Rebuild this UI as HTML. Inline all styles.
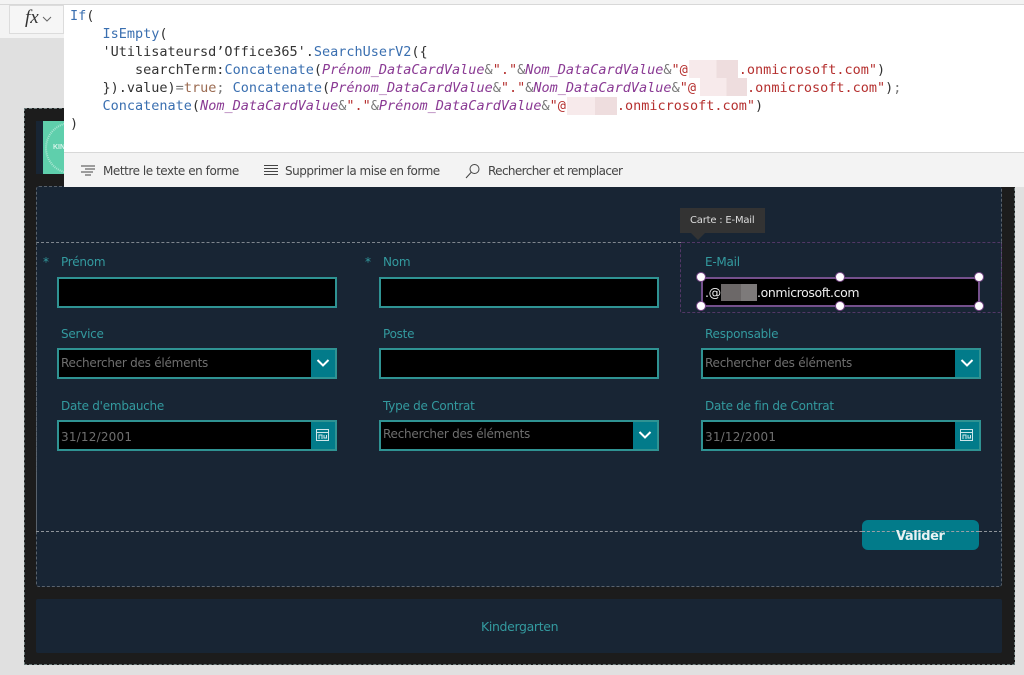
<!DOCTYPE html>
<html><head><meta charset="utf-8">
<style>
html,body{margin:0;padding:0;width:1024px;height:675px;overflow:hidden;background:#e0e0e0;font-family:"DejaVu Sans","Liberation Sans",sans-serif}
.a{position:absolute;box-sizing:border-box}
.t{position:absolute;white-space:nowrap;font-size:12px;line-height:16px;letter-spacing:-.02em}
.lab{color:#339a9f}
.in{position:absolute;box-sizing:border-box;width:280px;height:31px;background:#000;border:2px solid #2f9393}
.btn{position:absolute;right:0;top:0;bottom:0;width:24px;background:#027b8a}
.ph{position:absolute;left:2px;top:5px;color:#6f6f6f;font-size:12px;line-height:16px;white-space:nowrap;letter-spacing:-.02em}
.dt{top:7px;letter-spacing:.2px}
.code{position:absolute;left:70px;top:7px;font:13.500px/18px "DejaVu Sans Mono",monospace;color:#333;white-space:pre}
.gap{display:inline-block;width:51px}
.f{color:#3a6fb0}.v{color:#8a3a94;font-style:italic}.s{color:#b5302f}.g{color:#777}.b{color:#9a6a50}
.blur{position:absolute;height:18px;background:linear-gradient(90deg,#f7eaeb 0,#f7eaeb 56%,#eeddde 56%,#eeddde 100%)}
.h{position:absolute;width:10px;height:10px;border-radius:50%;background:#fff;border:1.500px solid #7b4a8b;box-sizing:border-box}
.tb{position:absolute;top:163px;font:12px/16px "DejaVu Sans","Liberation Sans",sans-serif;color:#444;white-space:nowrap;letter-spacing:-.5px}
</style></head><body>
<div class="a" style="left:0;top:0;width:1024px;height:38px;background:#f3f3f3"></div>
<div class="a" style="left:0;top:4px;width:1024px;height:1px;background:#d8d8d8"></div>
<div class="a" style="left:9px;top:5px;width:55px;height:29px;background:#f6f6f6;border:1px solid #dcdcdc"></div>
<div class="t" style="left:25px;top:8px;font:italic 19px/20px 'Liberation Serif',serif;color:#333;letter-spacing:0">fx</div>
<svg class="a" style="left:41px;top:15px" width="12" height="8"><path d="M2 2 L6 6 L10 2" fill="none" stroke="#666" stroke-width="1"/></svg>

<div class="a" style="left:24px;top:108px;width:991px;height:557px;background:#1c1c1c;border:1px dashed #6b7a7a"></div>
<div class="a" style="left:36px;top:121px;width:8px;height:53px;background:#182534"></div>
<div class="a" style="left:43px;top:121px;width:22px;height:53px;background:#5fcfac;overflow:hidden">
<svg width="22" height="53" style="position:absolute;left:0;top:0"><circle cx="28" cy="27" r="25" fill="none" stroke="#a8e6d2" stroke-width="2" stroke-dasharray="1 1"/></svg>
<div style="position:absolute;left:10px;top:22px;font:bold 7px/9px 'Liberation Sans',sans-serif;color:#d8f4ea">KIN</div></div>
<div class="a" style="left:36px;top:186px;width:966px;height:401px;background:#182534;border:1px dashed #59626c;border-radius:3px"></div>
<div class="a" style="left:36px;top:599px;width:966px;height:54px;background:#182534;border-radius:2px"></div>
<div class="t lab" style="left:481px;top:619px;font-size:12.500px;letter-spacing:-.35px">Kindergarten</div>

<div class="a" style="left:36px;top:242px;width:645px;height:290px;border-top:1px dashed #7f868e;border-left:1px dashed #59626c"></div>
<div class="a" style="left:36px;top:531px;width:966px;height:1px;border-top:1px dashed #8f959b"></div>
<div class="a" style="left:1001px;top:242px;width:1px;height:290px;border-left:1px dashed #59626c"></div>
<div class="a" style="left:680px;top:242px;width:322px;height:71px;border:1px dashed #523766;border-radius:2px"></div>

<div class="a" style="left:680px;top:208px;width:85px;height:25px;background:#333"></div>
<div class="a" style="left:691px;top:233px;width:0;height:0;border-left:7px solid transparent;border-right:7px solid transparent;border-top:7px solid #333"></div>
<div class="t" style="left:690px;top:213px;font-size:10px;line-height:15px;color:#ddd">Carte : E-Mail</div>

<div class="t lab" style="left:43px;top:254px">*</div>
<div class="t lab" style="left:61px;top:254px">Prénom</div>
<div class="t lab" style="left:365px;top:254px">*</div>
<div class="t lab" style="left:383px;top:254px">Nom</div>
<div class="t lab" style="left:705px;top:254px">E-Mail</div>
<div class="t lab" style="left:61px;top:326px">Service</div>
<div class="t lab" style="left:383px;top:326px">Poste</div>
<div class="t lab" style="left:705px;top:326px">Responsable</div>
<div class="t lab" style="left:61px;top:398px">Date d'embauche</div>
<div class="t lab" style="left:383px;top:398px">Type de Contrat</div>
<div class="t lab" style="left:705px;top:398px">Date de fin de Contrat</div>

<div class="in" style="left:57px;top:277px"></div>
<div class="in" style="left:379px;top:277px"></div>
<div class="in" style="left:701px;top:277px;width:279px;height:30px;border-color:#74508c"></div>
<div class="t" style="left:705px;top:285px;color:#eee;font-size:12.500px;letter-spacing:-.4px">.@</div>
<div class="a" style="left:721px;top:284px;width:36px;height:17px;background:linear-gradient(90deg,#6c6868 0,#6c6868 55%,#7d7a7a 55%,#7d7a7a 100%)"></div>
<div class="t" style="left:757px;top:285px;color:#eee;font-size:12.500px;letter-spacing:-.4px">.onmicrosoft.com</div>
<div class="h" style="left:696px;top:272px"></div><div class="h" style="left:835px;top:272px"></div><div class="h" style="left:974px;top:272px"></div>
<div class="h" style="left:696px;top:301px"></div><div class="h" style="left:835px;top:301px"></div><div class="h" style="left:974px;top:301px"></div>

<div class="in" style="left:57px;top:348px"><div class="ph">Rechercher des éléments</div><div class="btn"><svg width="24" height="27"><path d="M6.500 10 L12 15.500 L17.500 10" fill="none" stroke="#fff" stroke-width="2"/></svg></div></div>
<div class="in" style="left:379px;top:348px"></div>
<div class="in" style="left:701px;top:348px"><div class="ph">Rechercher des éléments</div><div class="btn"><svg width="24" height="27"><path d="M6.500 10 L12 15.500 L17.500 10" fill="none" stroke="#fff" stroke-width="2"/></svg></div></div>

<div class="in" style="left:57px;top:420px"><div class="ph dt">31/12/2001</div><div class="btn"><svg width="24" height="27"><path d="M5.500 7.500h12v11h-12zM5.500 10.500h12M8 17v-4h3v4M13 13v3h2.500v-3" fill="none" stroke="#cfe6ea" stroke-width="1"/></svg></div></div>
<div class="in" style="left:379px;top:420px"><div class="ph" style="top:4px">Rechercher des éléments</div><div class="btn"><svg width="24" height="27"><path d="M6.500 10 L12 15.500 L17.500 10" fill="none" stroke="#fff" stroke-width="2"/></svg></div></div>
<div class="in" style="left:701px;top:420px"><div class="ph dt">31/12/2001</div><div class="btn"><svg width="24" height="27"><path d="M5.500 7.500h12v11h-12zM5.500 10.500h12M8 17v-4h3v4M13 13v3h2.500v-3" fill="none" stroke="#cfe6ea" stroke-width="1"/></svg></div></div>

<div class="a" style="left:862px;top:520px;width:117px;height:30px;background:#027b8a;border-radius:6px"></div>
<div class="a" style="left:862px;top:531px;width:117px;height:1px;border-top:1px dashed #9aa0a6"></div>
<div class="t" style="left:896px;top:529px;font-size:13px;font-weight:bold;color:#e8f2f3;letter-spacing:-.45px">Valider</div>

<div class="a" style="left:64px;top:5px;width:960px;height:148px;background:#fff"></div>
<div class="a" style="left:64px;top:152px;width:960px;height:35px;background:#f3f3f3;border-top:1px solid #d8d8d8"></div>
<div class="code"><span class="f">If</span>(
    <span class="f">IsEmpty</span>(
    'Utilisateursd’Office365'.<span class="f">SearchUserV2</span>({
        searchTerm:<span class="f">Concatenate</span>(<span class="v">Prénom_DataCardValue</span><span class="g">&amp;</span><span class="s">"."</span><span class="g">&amp;</span><span class="v">Nom_DataCardValue</span><span class="g">&amp;</span><span class="s">"@<span class="gap"> </span>.onmicrosoft.com"</span>)
    }).value)<span class="g">=</span><span class="b">true</span><span class="g">;</span> <span class="f">Concatenate</span>(<span class="v">Prénom_DataCardValue</span><span class="g">&amp;</span><span class="s">"."</span><span class="g">&amp;</span><span class="v">Nom_DataCardValue</span><span class="g">&amp;</span><span class="s">"@<span class="gap"> </span>.onmicrosoft.com"</span>)<span class="g">;</span>
    <span class="f">Concatenate</span>(<span class="v">Nom_DataCardValue</span><span class="g">&amp;</span><span class="s">"."</span><span class="g">&amp;</span><span class="v">Prénom_DataCardValue</span><span class="g">&amp;</span><span class="s">"@<span class="gap"> </span>.onmicrosoft.com"</span>)
)</div>
<div class="blur" style="left:689px;top:60px;width:49px"></div>
<div class="blur" style="left:700px;top:78px;width:47px"></div>
<div class="blur" style="left:567px;top:97px;width:50px"></div>

<svg class="a" style="left:80px;top:164px" width="16" height="13"><path d="M1 2h14M5 5h10M1 8h12M5 11h6" stroke="#444" stroke-width="1" fill="none"/></svg>
<div class="tb" style="left:103px;letter-spacing:-.45px">Mettre le texte en forme</div>
<svg class="a" style="left:263px;top:164px" width="16" height="13"><path d="M1 1.500h14M1 4.500h14M1 7.500h14M1 10.500h14" stroke="#444" stroke-width="1" fill="none"/></svg>
<div class="tb" style="left:285px;letter-spacing:-.5px">Supprimer la mise en forme</div>
<svg class="a" style="left:465px;top:163px" width="16" height="16"><circle cx="9.500" cy="6" r="4.500" fill="none" stroke="#444"/><path d="M6 9.500L1 15" stroke="#444" fill="none"/></svg>
<div class="tb" style="left:488px;letter-spacing:-.62px">Rechercher et remplacer</div>
</body></html>
